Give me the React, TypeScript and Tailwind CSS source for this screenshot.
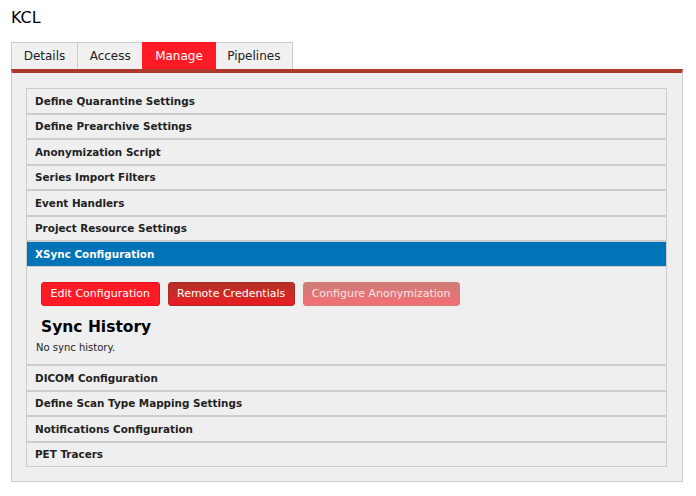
import React from "react";

const rowsTop = [
  "Define Quarantine Settings",
  "Define Prearchive Settings",
  "Anonymization Script",
  "Series Import Filters",
  "Event Handlers",
  "Project Resource Settings",
];
const rowsBottom = [
  "DICOM Configuration",
  "Define Scan Type Mapping Settings",
  "Notifications Configuration",
  "PET Tracers",
];

function Row({ label }: { label: string }) {
  return (
    <div className="box-border h-[25.5px] border border-[#cccccc] bg-[#efefef] pl-[8px] pt-[2px] flex items-center text-[10.4px] font-bold text-[#222222]">
      {label}
    </div>
  );
}

export default function App() {
  const tabs = ["Details", "Access", "Manage", "Pipelines"];
  return (
    <div className="w-[696px] h-[496px] bg-white px-[11px] font-['DejaVu_Sans',sans-serif] text-[#222222]">
      <div className="pt-[9px] text-[16px] leading-[18px] text-black">KCL</div>
      <div className="mt-[15px] flex">
        {tabs.map((t, i) => (
          <div
            key={t}
            className={
              "box-border h-[27px] px-[11.7px] flex items-center text-[12px] border border-b-0 border-[#cccccc] " +
              (i > 0 ? "-ml-px " : "") +
              (t === "Manage"
                ? "bg-[#ff1a25] text-white border-[#ff1a25] relative"
                : "bg-[#f0f0f0] text-[#222222]")
            }
          >
            {t}
          </div>
        ))}
      </div>
      <div className="box-border w-[672px] border border-[#cccccc] border-t-4 border-t-[#b0392d] bg-[#efefef] pt-[15px] pl-[14px] pr-[15px] pb-[14px]">
        <div className="flex flex-col">
          {rowsTop.map((r) => (
            <Row key={r} label={r} />
          ))}
          <div className="box-border h-[25.5px] border border-[#cccccc] bg-[#0074b7] pl-[8px] pt-[2px] flex items-center text-[10.4px] font-bold text-white">
            XSync Configuration
          </div>
          <div className="box-border h-[98.5px] border border-t-0 border-[#cccccc] bg-[#efefef] pt-[15.5px] pl-[9px]">
            <div className="flex gap-[8px] pl-[5px]">
              <button className="box-border h-[24px] px-[8.6px] rounded-[3px] border border-[#e8101c] bg-[#ff1a26] text-white text-[11px]">
                Edit Configuration
              </button>
              <button className="box-border h-[24px] px-[8.4px] rounded-[3px] border border-[#a82a24] bg-gradient-to-b from-[#b32f29] to-[#ea1a21] text-white text-[11px]">
                Remote Credentials
              </button>
              <button className="box-border h-[24px] px-[8px] rounded-[3px] border border-[#d07e7a] bg-gradient-to-b from-[#cf7c77] to-[#f26e75] text-[#fbe4e4] text-[11px]">
                Configure Anonymization
              </button>
            </div>
            <div className="mt-[11.5px] ml-[5px] text-[15.5px] leading-[18.6px] font-bold text-black">
              Sync History
            </div>
            <div className="mt-[5.5px] text-[10px] leading-[11.6px] text-[#222222]">No sync history.</div>
          </div>
          {rowsBottom.map((r) => (
            <Row key={r} label={r} />
          ))}
        </div>
      </div>
    </div>
  );
}
